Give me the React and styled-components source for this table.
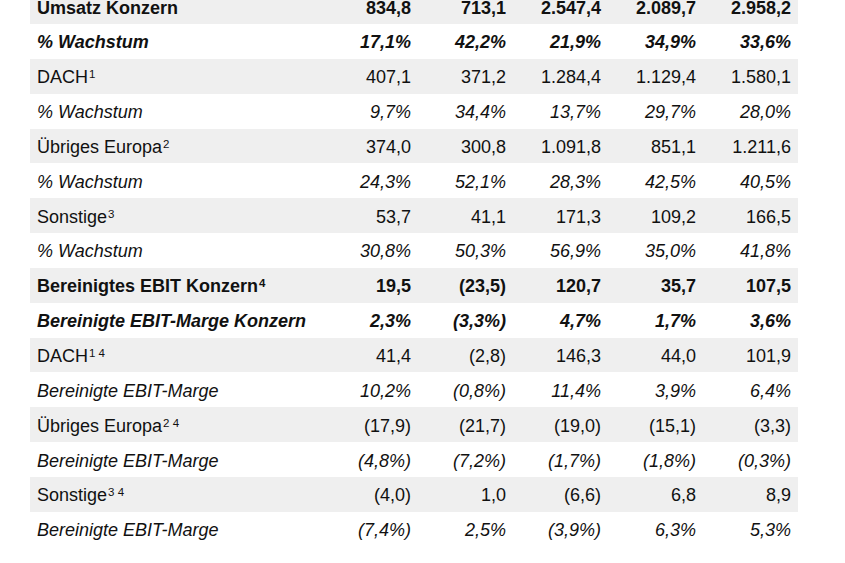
import styled, { createGlobalStyle } from 'styled-components';

const GlobalStyle = createGlobalStyle`
  html, body {
    margin: 0;
    padding: 0;
    background: #ffffff;
  }
  body {
    font-family: "Liberation Sans", Arial, sans-serif;
    color: #111111;
    overflow: hidden;
  }
`;

const Page = styled.div`
  width: 845px;
  height: 563px;
  padding-left: 30px;
  box-sizing: border-box;
`;

const Table = styled.div`
  width: 768px;
  margin-top: -10.85px;
  display: flex;
  flex-direction: column;
`;

const Row = styled.div`
  display: grid;
  grid-template-columns: 293px repeat(5, 95px);
  height: 34.85px;
  box-sizing: border-box;
  padding-top: 2px;
  align-items: center;
  background: ${props => props.shaded ? '#efefef' : '#ffffff'};
  font-size: 18px;
  font-weight: ${props => props.bold ? 700 : 400};
  font-style: ${props => props.italic ? 'italic' : 'normal'};
  line-height: 20px;
`;

const Label = styled.div`
  padding-left: 7px;
  white-space: nowrap;
`;

const Value = styled.div`
  text-align: right;
  padding-right: 7px;
  white-space: nowrap;
`;

const Sup = styled.span`
  font-size: 11.5px;
  font-style: normal;
  vertical-align: 5px;
  line-height: 0;
  margin-left: 1px;
`;

const rows = [
  { label: 'Umsatz Konzern', bold: true, values: ['834,8', '713,1', '2.547,4', '2.089,7', '2.958,2'] },
  { label: '% Wachstum', bold: true, italic: true, values: ['17,1%', '42,2%', '21,9%', '34,9%', '33,6%'] },
  { label: 'DACH', sup: '1', values: ['407,1', '371,2', '1.284,4', '1.129,4', '1.580,1'] },
  { label: '% Wachstum', italic: true, values: ['9,7%', '34,4%', '13,7%', '29,7%', '28,0%'] },
  { label: 'Übriges Europa', sup: '2', values: ['374,0', '300,8', '1.091,8', '851,1', '1.211,6'] },
  { label: '% Wachstum', italic: true, values: ['24,3%', '52,1%', '28,3%', '42,5%', '40,5%'] },
  { label: 'Sonstige', sup: '3', values: ['53,7', '41,1', '171,3', '109,2', '166,5'] },
  { label: '% Wachstum', italic: true, values: ['30,8%', '50,3%', '56,9%', '35,0%', '41,8%'] },
  { label: 'Bereinigtes EBIT Konzern', sup: '4', bold: true, values: ['19,5', '(23,5)', '120,7', '35,7', '107,5'] },
  { label: 'Bereinigte EBIT-Marge Konzern', bold: true, italic: true, values: ['2,3%', '(3,3%)', '4,7%', '1,7%', '3,6%'] },
  { label: 'DACH', sup: '1 4', values: ['41,4', '(2,8)', '146,3', '44,0', '101,9'] },
  { label: 'Bereinigte EBIT-Marge', italic: true, values: ['10,2%', '(0,8%)', '11,4%', '3,9%', '6,4%'] },
  { label: 'Übriges Europa', sup: '2 4', values: ['(17,9)', '(21,7)', '(19,0)', '(15,1)', '(3,3)'] },
  { label: 'Bereinigte EBIT-Marge', italic: true, values: ['(4,8%)', '(7,2%)', '(1,7%)', '(1,8%)', '(0,3%)'] },
  { label: 'Sonstige', sup: '3 4', values: ['(4,0)', '1,0', '(6,6)', '6,8', '8,9'] },
  { label: 'Bereinigte EBIT-Marge', italic: true, values: ['(7,4%)', '2,5%', '(3,9%)', '6,3%', '5,3%'] },
];

export default function App() {
  return (
    <>
      <GlobalStyle />
      <Page>
        <Table>
          {rows.map((r, i) => (
            <Row key={i} shaded={i % 2 === 0} bold={r.bold} italic={r.italic}>
              <Label>
                {r.label}
                {r.sup && <Sup>{r.sup}</Sup>}
              </Label>
              {r.values.map((v, j) => <Value key={j}>{v}</Value>)}
            </Row>
          ))}
        </Table>
      </Page>
    </>
  );
}
